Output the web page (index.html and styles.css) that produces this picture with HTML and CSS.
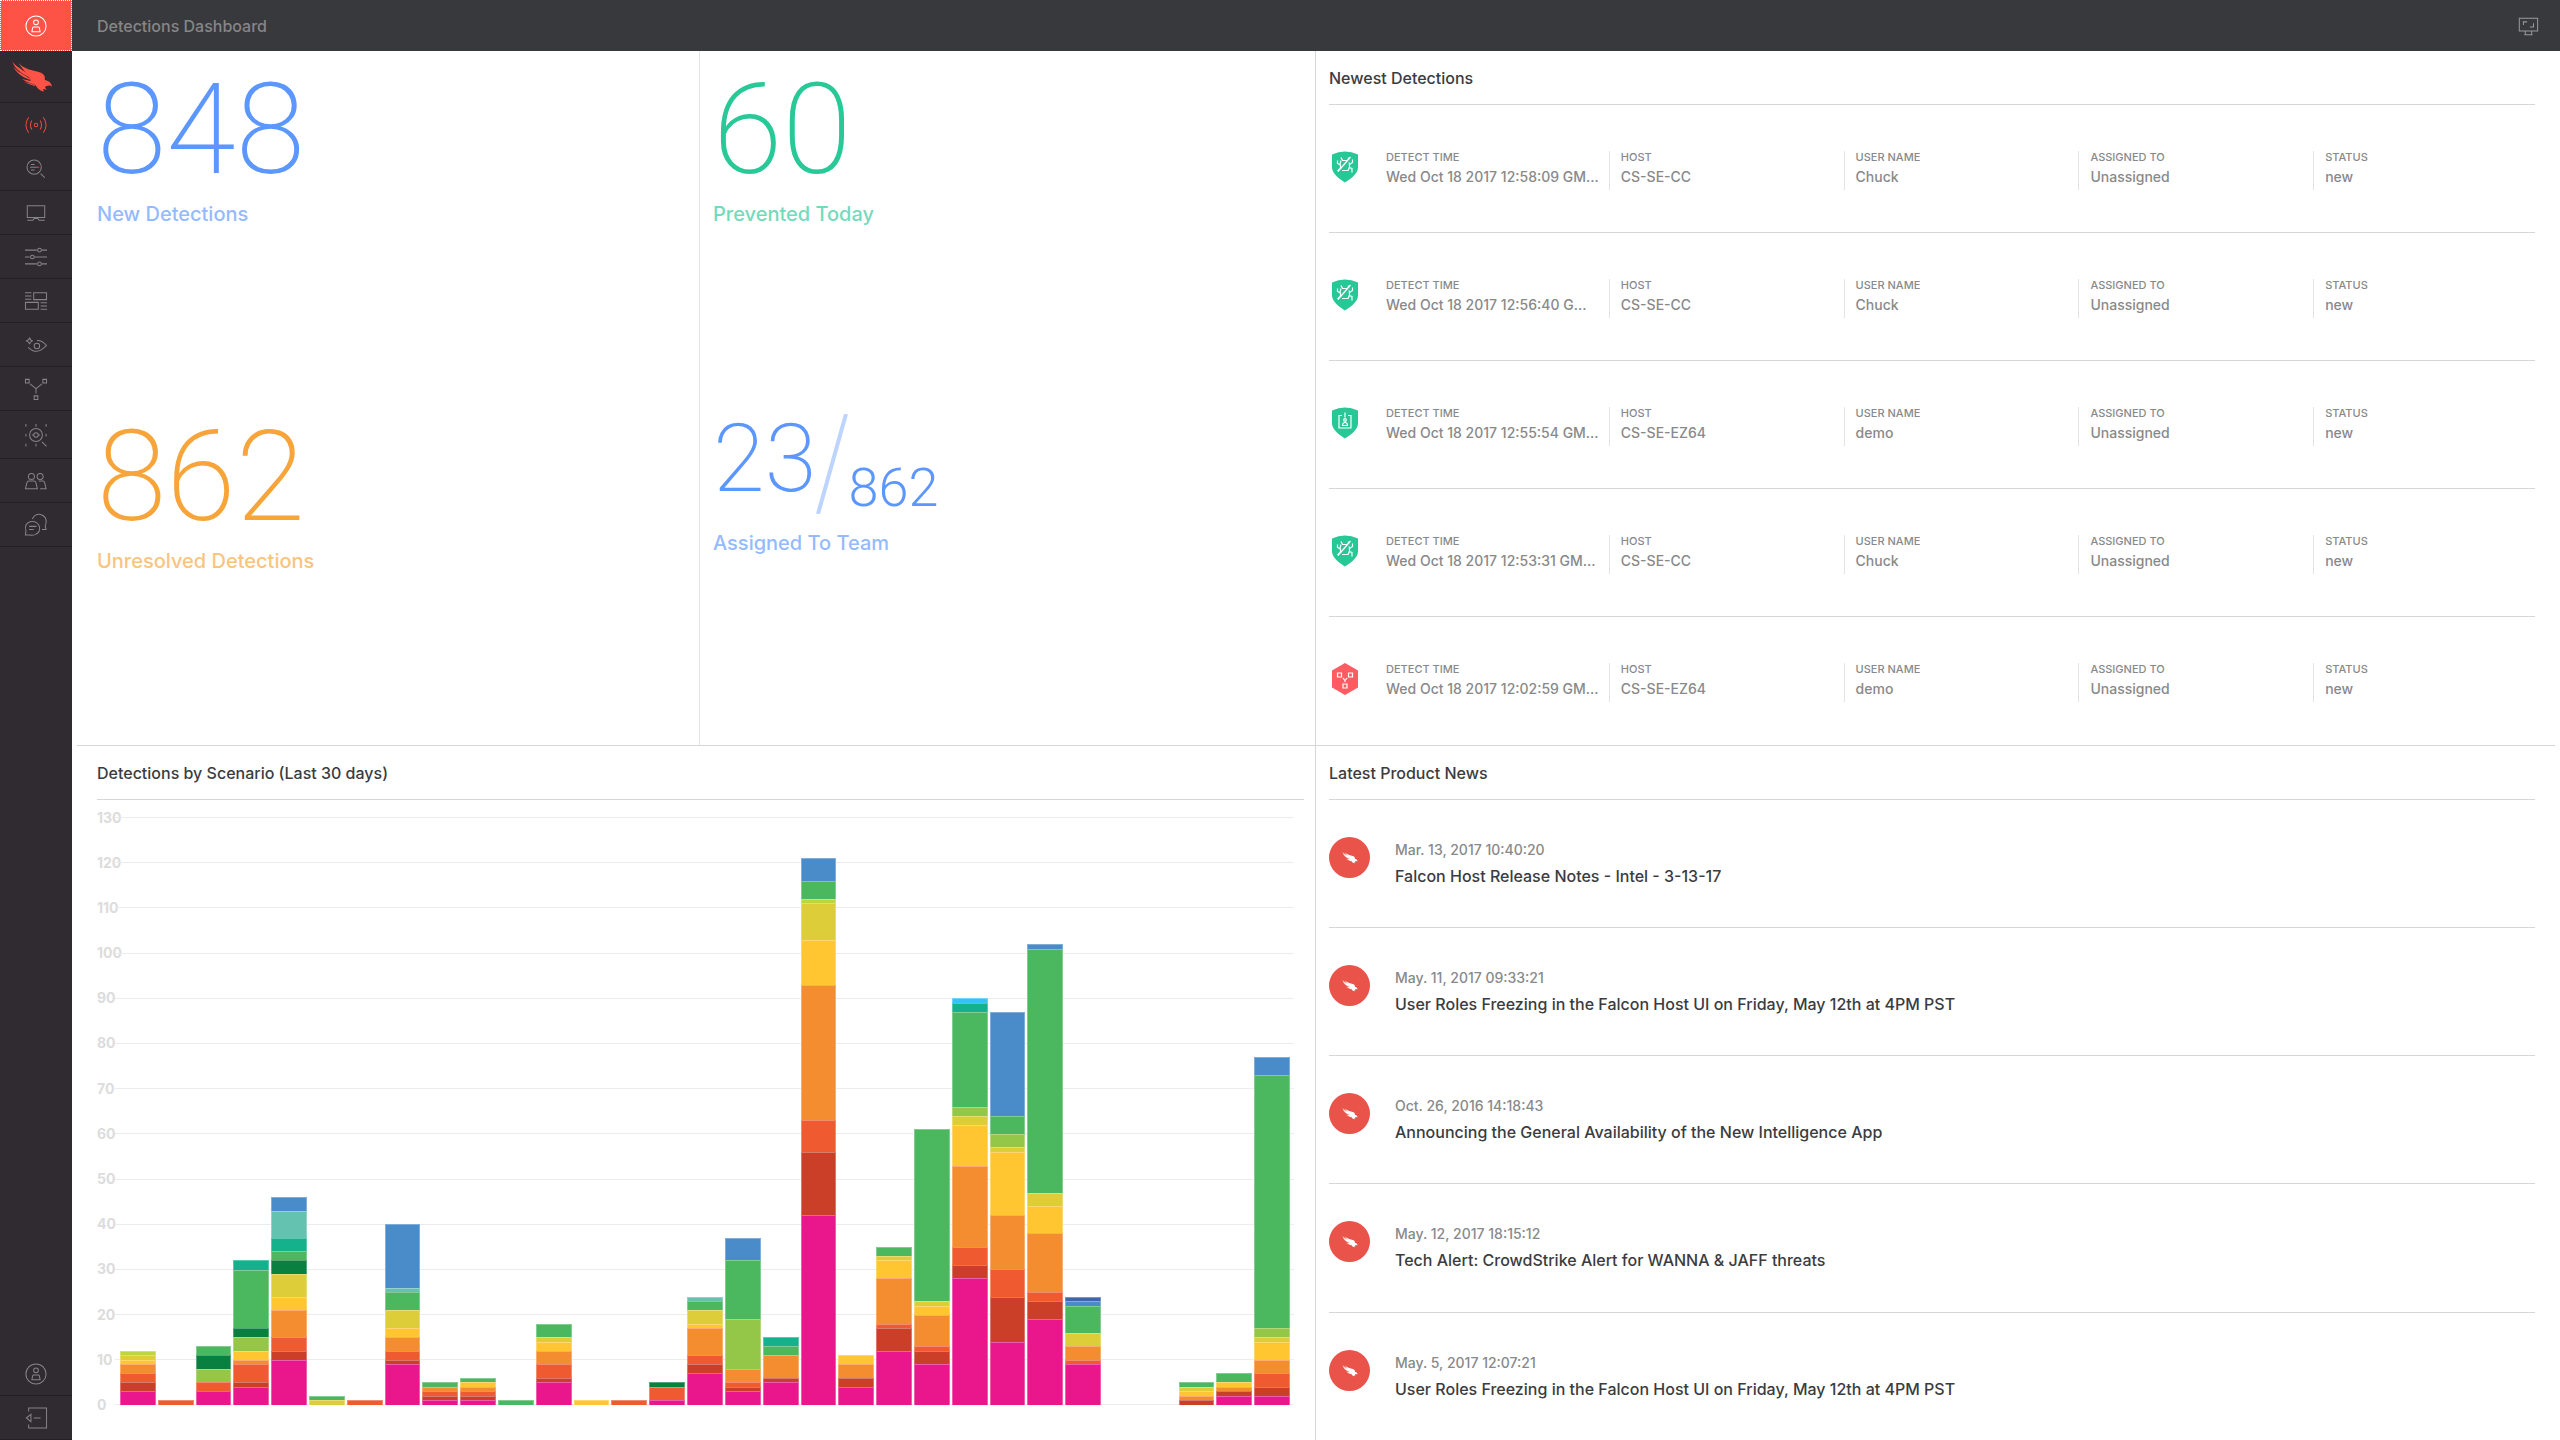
FILE: index.html
```html
<!DOCTYPE html>
<html lang="en">
<head>
<meta charset="utf-8">
<title>Detections Dashboard</title>
<link rel="stylesheet" href="styles.css">
</head>
<body>
<svg class="defs" aria-hidden="true">
  <symbol id="user" viewBox="0 0 24 24"><circle cx="12" cy="12" r="11"/><circle cx="12" cy="8" r="2.6"/><path d="M7.5 18.300l.8-4.300q.3-1 1.300-1h4.800q1 0 1.300 1l.8 4.300z"/></symbol>
  <symbol id="falcon" viewBox="30 178 132 102"><path d="M54 186C66 202 84 206 104 212 128 216 140 224 136 240 146 242 156 246 159 262 154 256 148 256 142 259 134 261 138 268 144 271L130 268 134 277C120 273 112 266 108 257 96 250 84 250 64 237L92 243C88 222 62 206 54 186ZM33 181C42 196 66 206 87 226L90 233C66 221 44 208 33 181ZM37 197C48 214 68 222 90 236L88 239C66 231 46 218 37 197ZM70 246Q88 249 104 256L106 260Q90 254 70 246Z"/></symbol>
  <symbol id="bug" viewBox="0 0 26 31"><path class="badge-shape" d="M0 3Q13-3 26 3v13c0 7-10 13-13 15C10 29 0 23 0 16z"/><path class="badge-line" d="M6 20 18.500 5.500M9 6l1.500 3h5L17 6M5.500 9v3l3 1.500v3l-3 3M9 9q-2 5 .5 8M20.500 8v3l-3 2M17 11q1.500 4-1 8h-6M17 16l3 1v4"/></symbol>
  <symbol id="host" viewBox="0 0 26 31"><path class="badge-shape" d="M0 3Q13-3 26 3v13c0 7-10 13-13 15C10 29 0 23 0 16z"/><path class="badge-line" d="M10 8H7v12.500h12V8h-3M13 5v5M10.500 18q0-3 2.500-3t2.500 3z"/><circle class="badge-line" cx="13" cy="12.500" r="1.300"/></symbol>
  <symbol id="graph" viewBox="0 0 26 32"><path class="badge-shape" d="M13 0 26 7.500v17L13 32 0 24.500v-17z"/><path class="badge-line" d="M5.500 10h4v4h-4zM16.500 10h4v4h-4zM11 21h4v4h-4zM11 15l2 2.500 2-2.500M13 17v2"/></symbol>
</svg>
<div class="app">
  <nav class="sidebar" aria-label="Main">
    <a class="account" href="#" aria-label="Account"><svg class="icon"><use href="#user"/></svg></a>
    <a class="logo" href="#" aria-label="Falcon"><svg class="logo-mark"><use href="#falcon"/></svg></a>
    <a class="nav-item current" href="#" aria-label="Activity"><svg class="icon" viewBox="0 0 24 24"><circle cx="12" cy="12" r="1.900"/><path d="M4 3.500q-6 8.500 0 17M20 3.500q6 8.500 0 17M7.500 7q-3 5 0 10M16.500 7q3 5 0 10"/></svg></a>
    <a class="nav-item" href="#" aria-label="Investigate"><svg class="icon" viewBox="0 0 24 24"><circle cx="10" cy="10" r="7.800"/><path d="m17 17 4.500 4.500M6.500 7h4M5.500 10H13M6.500 13h4"/><path class="accent" d="M13 10h2.500"/></svg></a>
    <a class="nav-item" href="#" aria-label="Hosts"><svg class="icon" viewBox="0 0 24 24"><path d="M2.500 4h19v13h-19zM2.500 20h6l1.500-2h4l1.500 2h6"/></svg></a>
    <a class="nav-item" href="#" aria-label="Configuration"><svg class="icon" viewBox="0 0 24 24"><path d="M0 4.500h13m5 0h6M0 12h5m5 0h14M0 19.500h13m5 0h6"/><circle cx="15.800" cy="4.500" r="2"/><circle cx="8" cy="12" r="2"/><circle cx="15.800" cy="19.500" r="2"/></svg></a>
    <a class="nav-item" href="#" aria-label="Dashboards"><svg class="icon" viewBox="0 0 24 24"><path d="M9.500 3h14v7.500h-14zM.5 13.500h14V21H.5zM0 3h7M0 6.500h7M0 10h7M17 14h7M17 17.500h7M17 21h7"/></svg></a>
    <a class="nav-item" href="#" aria-label="Discover"><svg class="icon" viewBox="0 0 24 24"><circle cx="13" cy="13" r="3"/><path d="M3.500 14.500q8.500 8 16 1.500l4-3.500q-5-6-10.500-5.500M5 4q.5 3 3.500 3.500Q5.500 8 5 11 4.500 8 1 7.500 4.500 7 5 4z"/></svg></a>
    <a class="nav-item" href="#" aria-label="Intelligence"><svg class="icon" viewBox="0 0 24 24"><path d="M.5 1.500h4v4h-4zM19.500 1.500h4v4h-4zM10 19.500h4v4h-4zM5.500 6.500 12 11.500l6.500-5M12 11.500V17"/></svg></a>
    <a class="nav-item tall" href="#" aria-label="Scan"><svg class="icon" viewBox="0 0 24 24"><circle cx="12" cy="12" r="7"/><circle cx="12" cy="12" r="2.500"/><path d="m18.500 19.500 5 5M9 12H7.500m9 0H15M1 0v3M12 0v3M23 0v3M1 10.500v3M23 10.500v3M1 21.500v3M12 21.500v3"/></svg></a>
    <a class="nav-item" href="#" aria-label="Users"><svg class="icon" viewBox="0 0 24 24"><circle cx="7" cy="7" r="3.300"/><circle cx="16.500" cy="7" r="3.300"/><path d="M.5 20.500 2 14q.5-2 2-2h6q1.500 0 2 2l1.500 6.500zM15 12h4.500q1.500 0 2 2l1.500 6.500h-6.500"/></svg></a>
    <a class="nav-item" href="#" aria-label="Support"><svg class="icon" viewBox="0 0 24 24"><path d="M.5 23 1 18q-2-7 4.500-9.500 7-1.500 10 4.500 2 7-4.500 9.500-3 1-5.500.3zM8 5.500Q11-.5 17 .500q7 2 6 9.500l-1 3 1 4h-4.500M4.500 13.500h8M4.500 17h5"/></svg></a>
    <a class="nav-item bottom" href="#" aria-label="Profile"><svg class="icon"><use href="#user"/></svg></a>
    <a class="nav-item" href="#" aria-label="Sign out"><svg class="icon" viewBox="0 0 24 24"><path d="M4 5V1h19.500v22H4v-4M1.500 12l5-4v8zM9.500 12H17"/></svg></a>
  </nav>
  <div class="page">
    <header class="topbar">
      <h1>Detections Dashboard</h1>
      <button class="fullscreen" type="button" aria-label="Full screen"><svg class="icon" viewBox="0 0 24 24"><path d="M2.500 3.500h20v14h-20zM9 17.500v3.500M16 17.500v3.500M8 21.500h9M7 11V7.500h4M14 13h4V9"/></svg></button>
    </header>
    <main class="board">
      <section class="stats">
        <div class="stat blue"><div class="figure">848</div><div class="caption">New Detections</div></div>
        <div class="stat green"><div class="figure">60</div><div class="caption">Prevented Today</div></div>
        <div class="stat orange"><div class="figure">862</div><div class="caption">Unresolved Detections</div></div>
        <div class="stat blue"><div class="ratio"><span class="part">23</span><svg class="slash" viewBox="0 0 32 100"><path d="M2 100 30 0"/></svg><span class="whole">862</span></div><div class="caption">Assigned To Team</div></div>
      </section>
      <section class="panel side detections">
        <h2>Newest Detections</h2>
        <ul class="rows">
          <li class="detection"><svg class="badge safe"><use href="#bug"/></svg><dl><div><dt>DETECT TIME</dt><dd>Wed Oct 18 2017 12:58:09 GM...</dd></div><div><dt>HOST</dt><dd>CS-SE-CC</dd></div><div><dt>USER NAME</dt><dd>Chuck</dd></div><div><dt>ASSIGNED TO</dt><dd>Unassigned</dd></div><div><dt>STATUS</dt><dd>new</dd></div></dl></li>
          <li class="detection"><svg class="badge safe"><use href="#bug"/></svg><dl><div><dt>DETECT TIME</dt><dd>Wed Oct 18 2017 12:56:40 G...</dd></div><div><dt>HOST</dt><dd>CS-SE-CC</dd></div><div><dt>USER NAME</dt><dd>Chuck</dd></div><div><dt>ASSIGNED TO</dt><dd>Unassigned</dd></div><div><dt>STATUS</dt><dd>new</dd></div></dl></li>
          <li class="detection"><svg class="badge safe"><use href="#host"/></svg><dl><div><dt>DETECT TIME</dt><dd>Wed Oct 18 2017 12:55:54 GM...</dd></div><div><dt>HOST</dt><dd>CS-SE-EZ64</dd></div><div><dt>USER NAME</dt><dd>demo</dd></div><div><dt>ASSIGNED TO</dt><dd>Unassigned</dd></div><div><dt>STATUS</dt><dd>new</dd></div></dl></li>
          <li class="detection"><svg class="badge safe"><use href="#bug"/></svg><dl><div><dt>DETECT TIME</dt><dd>Wed Oct 18 2017 12:53:31 GM...</dd></div><div><dt>HOST</dt><dd>CS-SE-CC</dd></div><div><dt>USER NAME</dt><dd>Chuck</dd></div><div><dt>ASSIGNED TO</dt><dd>Unassigned</dd></div><div><dt>STATUS</dt><dd>new</dd></div></dl></li>
          <li class="detection"><svg class="badge threat"><use href="#graph"/></svg><dl><div><dt>DETECT TIME</dt><dd>Wed Oct 18 2017 12:02:59 GM...</dd></div><div><dt>HOST</dt><dd>CS-SE-EZ64</dd></div><div><dt>USER NAME</dt><dd>demo</dd></div><div><dt>ASSIGNED TO</dt><dd>Unassigned</dd></div><div><dt>STATUS</dt><dd>new</dd></div></dl></li>
        </ul>
      </section>
      <section class="panel chart-panel">
        <h2>Detections by Scenario (Last 30 days)</h2>
        <div class="chart">
          <div class="axis" id="axis"></div>
          <div class="bars" id="bars"></div>
        </div>
      </section>
      <section class="panel side">
        <h2>Latest Product News</h2>
        <ul class="rows">
          <li class="news"><span class="disc"><svg><use href="#falcon"/></svg></span><div><time>Mar. 13, 2017 10:40:20</time><a href="#">Falcon Host Release Notes - Intel - 3-13-17</a></div></li>
          <li class="news"><span class="disc"><svg><use href="#falcon"/></svg></span><div><time>May. 11, 2017 09:33:21</time><a href="#">User Roles Freezing in the Falcon Host UI on Friday, May 12th at 4PM PST</a></div></li>
          <li class="news"><span class="disc"><svg><use href="#falcon"/></svg></span><div><time>Oct. 26, 2016 14:18:43</time><a href="#">Announcing the General Availability of the New Intelligence App</a></div></li>
          <li class="news"><span class="disc"><svg><use href="#falcon"/></svg></span><div><time>May. 12, 2017 18:15:12</time><a href="#">Tech Alert: CrowdStrike Alert for WANNA &amp; JAFF threats</a></div></li>
          <li class="news"><span class="disc"><svg><use href="#falcon"/></svg></span><div><time>May. 5, 2017 12:07:21</time><a href="#">User Roles Freezing in the Falcon Host UI on Friday, May 12th at 4PM PST</a></div></li>
        </ul>
      </section>
    </main>
  </div>
</div>
<script src="chart.js"></script>
</body>
</html>
```
FILE: styles.css
```css
* { box-sizing: border-box; }
body { margin: 0; font-family: Inter, "Liberation Sans", sans-serif; font-size: 16px; line-height: 20px; font-weight: 500; color: #3b3c3f; background: #fff; }
h1, h2, ul, dl, dd { margin: 0; padding: 0; font-size: 16px; font-weight: 500; }
ul { list-style: none; }
a { color: inherit; text-decoration: none; }
svg { display: block; }
.defs { position: absolute; width: 0; height: 0; }

.app { display: flex; min-height: 100vh; }
.sidebar { display: flex; flex-direction: column; flex: none; width: 72px; background: #302b30; color: #858486; }
.sidebar a { display: flex; align-items: center; justify-content: center; flex: none; border-bottom: 1px solid #222022; }
.sidebar .account { height: 51px; background: #fd5246; color: #fff; border: 1px dotted #fff; }
.sidebar .logo { height: 52px; color: #fd5246; padding-right: 8px; }
.logo-mark { width: 42px; height: 33px; fill: currentColor; }
.nav-item { height: 44px; }
.nav-item.tall { height: 48px; }
.sidebar .current { color: #e9483f; }
.nav-item.bottom { margin-top: auto; }
.icon { width: 22px; height: 22px; fill: none; stroke: currentColor; stroke-width: 1.1; overflow: visible; }
.accent { stroke: #e9483f; }

.page { display: flex; flex-direction: column; flex: 1; min-width: 0; }
.topbar { display: flex; align-items: center; justify-content: space-between; height: 51px; padding: 0 21px 0 25px; background: #38393d; color: #868686; }
.fullscreen { padding: 0; border: 0; background: none; color: #9a9a9c; }

.board { display: grid; flex: 1; grid-template-columns: 1fr 1fr; grid-template-rows: 1fr 1fr; }
.panel { display: flex; flex-direction: column; min-width: 0; }
.panel h2 { height: 54px; padding-top: 17px; border-bottom: 1px solid #d5d6d8; }
.side { margin-left: -1px; padding: 0 25px 0 13px; border-left: 1px solid #d5d6d8; }
.stats { display: grid; grid-template-columns: 623fr 616fr; grid-template-rows: 1fr 1fr; margin-left: 5px; border-bottom: 1px solid #d5d6d8; }
.stat { padding: 23px 13px 0; }
.stat:nth-child(odd) { padding-left: 20px; border-right: 1px solid #e3e4e6; }
.figure, .ratio { margin-bottom: 16px; font-family: Roboto, Inter, sans-serif; font-weight: 200; }
.figure { font-size: 126px; line-height: 112px; }
.caption { font-size: 20px; line-height: 24px; opacity: .65; }
.ratio { display: flex; align-items: flex-end; height: 94px; padding-bottom: 1px; }
.part { padding-bottom: 11px; font-size: 94px; line-height: 88px; }
.whole { font-size: 54px; line-height: 52px; font-weight: 300; }
.slash { width: 32px; height: 100px; stroke: currentColor; stroke-width: 4; opacity: .4; fill: none; }
.blue { color: #5c96ff; }
.green { color: #28c997; }
.orange { color: #f7a53a; }

.rows { display: grid; flex: 1; grid-auto-rows: 1fr; margin-bottom: -1px; }
.rows li { display: flex; min-height: 100px; border-bottom: 1px solid #d5d6d8; }
.rows li:last-child { border-bottom-color: transparent; }
.detections { margin-right: 5px; padding-right: 20px; border-bottom: 1px solid #d5d6d8; }
.detection { padding: 46px 0 0 3px; }
.badge { flex: none; width: 26px; height: 32px; margin-right: 16px; }
.safe { fill: #27c796; }
.threat { fill: #ff5b62; }
.badge-line { fill: none; stroke: #fff; stroke-width: 1.2; }
.detection dl { display: grid; flex: 1; grid-template-columns: repeat(5, minmax(0, 1fr)); height: 34px; margin-right: -13px; color: #88898b; }
.detection dl div { padding-left: 11px; white-space: nowrap; border-left: 1px solid #e3e4e6; }
.detection dl div:first-child { border-left-color: transparent; }
.detection dt { font-size: 11px; line-height: 13px; }
.detection dd { font-size: 14px; line-height: 26px; }
.news { gap: 25px; padding-top: 37px; }
.disc { display: grid; place-items: center; flex: none; width: 41px; height: 41px; border-radius: 50%; background: #e9534a; }
.disc svg { width: 16px; height: 15px; fill: #fff; }
.news time { display: block; padding-top: 3px; font-size: 14px; line-height: 20px; color: #88898b; }
.news a { display: block; line-height: 32px; }

.chart-panel { margin-left: 5px; padding: 0 12px 0 20px; }
.chart { position: relative; display: flex; flex: 1; margin: 18px 10px 35px 0; }
.axis { position: absolute; inset: 0; display: flex; flex-direction: column; justify-content: space-between; }
.tick { display: flex; align-items: center; height: 0; color: #dcdcdc; font-size: 14px; font-weight: 700; }
.tick span { width: 18px; white-space: nowrap; }
.tick::after { content: ""; flex: 1; border-top: 1px solid #ececec; }
.bars { position: relative; display: grid; flex: 1; grid-template-columns: repeat(31, 1fr); gap: 2px; padding: 0 4px 0 23px; align-items: end; }
.bar { display: flex; flex-direction: column-reverse; }
.bar i { border: solid rgba(255, 255, 255, .3); border-width: 1px 1px 0; }
```
FILE: chart.js
```js
const MAX = 130;
const COLORS = {
  pink: '#e9168c', brick: '#cb3f29', red: '#f05a30', orange: '#f48c30',
  amber: '#ffc631', mustard: '#ddcd38', lime: '#bcd63e', leaf: '#94c647',
  forest: '#0a8040', green: '#4bb75e', teal: '#14b18c', mint: '#64c2b0',
  blue: '#4a8cca', sky: '#32c5f4', navy: '#4263b0'
};
// One entry per day, segments listed from the baseline up.
const DAYS = [
  'pink 3 brick 2 red 2 orange 2 amber 1 mustard 1 lime 1',
  'red 1',
  'pink 3 red 2 leaf 3 forest 3 green 2',
  'pink 4 brick 1 red 4 orange 1 amber 2 leaf 3 forest 2 green 13 teal 2',
  'pink 10 brick 2 red 3 orange 6 amber 3 mustard 5 forest 3 green 2 teal 3 mint 6 blue 3',
  'mustard 1 green 1',
  'red 1',
  'pink 9 brick 1 red 2 orange 3 amber 2 mustard 4 green 4 mint 1 blue 14',
  'pink 1 brick 1 red 1 orange 1 green 1',
  'pink 1 brick 1 red 1 orange 1 amber 1 green 1',
  'green 1',
  'pink 5 brick 1 red 3 orange 3 amber 2 mustard 1 green 3',
  'amber 1',
  'red 1',
  'pink 1 red 3 forest 1',
  'pink 7 brick 2 red 2 orange 6 amber 1 mustard 3 green 2 mint 1',
  'pink 3 brick 1 red 1 orange 3 leaf 11 green 13 blue 5',
  'pink 5 brick 1 orange 5 green 2 teal 2',
  'pink 42 brick 14 red 7 orange 30 amber 10 mustard 8 lime 1 green 4 blue 5',
  'pink 4 brick 2 orange 3 amber 2',
  'pink 12 brick 5 red 1 orange 10 amber 4 mustard 1 green 2',
  'pink 9 brick 3 red 1 orange 7 amber 2 mustard 1 green 38',
  'pink 28 brick 3 red 4 orange 18 amber 9 mustard 2 leaf 2 green 21 teal 2 sky 1',
  'pink 14 brick 10 red 6 orange 12 amber 14 mustard 1 leaf 3 green 4 blue 23',
  'pink 19 brick 4 red 2 orange 13 amber 6 mustard 3 green 54 blue 1',
  'pink 9 red 1 orange 3 mustard 3 green 6 blue 1 navy 1',
  '',
  '',
  'brick 1 orange 1 amber 1 mustard 1 green 1',
  'pink 2 brick 1 orange 1 amber 1 green 2',
  'pink 2 brick 2 red 3 orange 3 amber 4 mustard 1 leaf 2 green 56 blue 4'
];

const axis = document.getElementById('axis');
for (let v = MAX; v >= 0; v -= 10) {
  const tick = document.createElement('div');
  tick.className = 'tick';
  tick.innerHTML = `<span>${v}</span>`;
  axis.append(tick);
}

const bars = document.getElementById('bars');
for (const day of DAYS) {
  const parts = day.match(/\w+ \d+/g) || [];
  const values = parts.map(p => Number(p.split(' ')[1]));
  const total = values.reduce((a, b) => a + b, 0);
  const bar = document.createElement('div');
  bar.className = 'bar';
  bar.style.height = `${total / MAX * 100}%`;
  parts.forEach((p, i) => {
    const segment = document.createElement('i');
    segment.style.height = `${values[i] / total * 100}%`;
    segment.style.background = COLORS[p.split(' ')[0]];
    bar.append(segment);
  });
  bars.append(bar);
}
```
